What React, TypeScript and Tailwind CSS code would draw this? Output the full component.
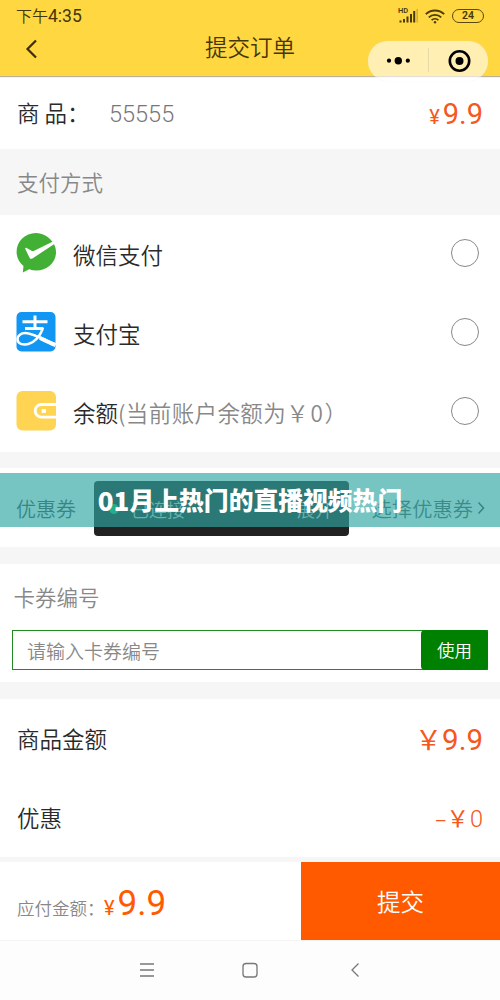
import type { ReactNode } from "react";

const methods = [
  { name: "微信支付", icon: <WechatIcon /> },
  { name: "支付宝", icon: <AlipayIcon /> },
  { name: "余额", note: "(当前账户余额为", amount: "￥0）", icon: <WalletIcon /> },
];

function WechatIcon() {
  return (
    <svg viewBox="0 0 40 40" className="h-10 w-10">
      <path
        d="M20 0C9 0 .6 8.300 .6 18.800c0 6 2.700 10.700 6.900 14.200L6.800 39.500l6.500-3.200c2.200.8 4.500 1.200 7 1.200C31.300 37.500 40 29.500 40 19.300c0-3-.6-5.600-2-8.100L16.500 25.400c-1 .7-2.200.6-2.800-.4L9.300 16c-.4-1 .5-1.600 1.400-1.100l4.800 2.900c.7.4 1.500.4 2.200.1L36.500 8.800C32.500 3.500 26.600 0 20 0Z"
        fill="#42b035"
      />
    </svg>
  );
}

function AlipayIcon() {
  return (
    <svg viewBox="0 0 40 40" className="h-10 w-10">
      <rect x=".5" width="39" height="39.500" rx="5" fill="#1296f3" />
      <g fill="none" stroke="#fff">
        <path d="M19 3.500v14M6.500 9.800h25M9 16.500h18" strokeWidth="3" />
        <path
          d="M27 15.500c-2.500 9-10 17-18.500 17-4.500 0-7-2-7-5.500s3.500-6 8-6c7 0 17 6 30 11.500"
          strokeWidth="2.600"
        />
        <path d="M24 26c5 2.500 10 5 15.500 7" strokeWidth="4" />
      </g>
    </svg>
  );
}

function WalletIcon() {
  return (
    <svg viewBox="0 0 40 40" className="h-10 w-10">
      <rect x=".5" width="39.500" height="39.500" rx="6" fill="#ffd452" />
      <path
        d="M40 13.500H25.500a6.300 6.300 0 0 0 0 12.600H40"
        fill="none"
        stroke="#fff"
        strokeWidth="2.800"
      />
      <rect x="25.500" y="18" width="4.500" height="4" rx="1" fill="#fff" />
    </svg>
  );
}

function StatusBar() {
  return (
    <div className="flex h-8 items-center pl-4 pr-4">
      <span className="text-[16px]">
        下午<span className="font-['Roboto'] text-[17.500px] font-normal">4:35</span>
      </span>
      <svg viewBox="0 0 20 16" className="ml-auto h-4 w-5 overflow-visible" fill="#4a3a08">
        <text x="-1" y="4.500" fontSize="7.500" fontWeight="600" className="font-['Roboto']">
          HD
        </text>
        <path d="M.5 12.500h2v2h-2zM4 11h2v3.500h-2zM7.500 8.500h2v6h-2zM11 6h2v8.500h-2zM14.200 3h2v11.500h-2z" />
        <path d="M17.500 1h1.300v13.500h-1.300z" opacity=".3" />
      </svg>
      <svg viewBox="0 0 20 15" className="ml-[6px] h-[15px] w-5" fill="none" stroke="#4a3a08" strokeWidth="1.800">
        <path d="M.8 5.200a13.300 13.300 0 0 1 18.400 0M3.800 8.300a9 9 0 0 1 12.400 0M6.600 11.200a5 5 0 0 1 6.800 0" />
        <circle cx="10" cy="13.200" r="1.200" fill="#4a3a08" stroke="none" />
      </svg>
      <span className="ml-[7px] flex h-[14px] w-8 items-center justify-center rounded-full border-[1.500px] border-[#5a480e] font-['Roboto'] text-[10.500px] font-semibold">
        24
      </span>
    </div>
  );
}

function Capsule() {
  return (
    <div className="absolute left-[368px] top-[41px] h-10 w-[120px] rounded-full bg-white/60 shadow-[0_0_1px_#e8e4d4]">
      <svg viewBox="0 0 120 40" className="h-10 w-[120px]">
        <circle cx="21" cy="19.700" r="2.100" />
        <circle cx="30.300" cy="19.700" r="3.700" />
        <circle cx="39.800" cy="19.700" r="2.100" />
        <path d="M60.500 7v24" stroke="#e6dba8" />
        <circle cx="91.500" cy="20" r="9.700" fill="none" stroke="#000" strokeWidth="2.600" />
        <circle cx="91.500" cy="20" r="4" />
      </svg>
    </div>
  );
}

function Row({ children, className = "px-[17px]" }: { children: ReactNode; className?: string }) {
  return (
    <div className={`flex h-[79px] items-center justify-between bg-white ${className}`}>
      {children}
    </div>
  );
}

function CouponSection() {
  return (
    <section className="relative">
      <Row className="pl-4 pr-[13px]">
        <span className="pt-[2px] text-[20px] text-[#444]">优惠券</span>
        <span className="flex items-center pt-[2px] text-[20.300px] text-[#555]">
          选择优惠券
          <svg viewBox="0 0 12 14" className="ml-[2px] h-[14px] w-3" fill="none" stroke="#444" strokeWidth="1.500">
            <path d="M3.500 1.500 8.500 7l-5 5.500" />
          </svg>
        </span>
      </Row>
      <div className="absolute left-[94px] top-[13px] flex h-[55px] w-[255px] items-center rounded bg-[#222] pl-[15px] pr-4 text-[18px] text-[#ccc]">
        <i className="h-[10px] w-[10px] rounded-full bg-[#07c160]" />
        <span className="ml-3">已连接</span>
        <span className="ml-auto">展开</span>
      </div>
      <div className="absolute left-0 top-[5px] flex h-[54px] w-full items-center justify-center bg-[rgba(47,167,164,0.66)] pb-px text-[24.800px] font-black text-white">
        <span className="text-[26px]">01</span>月上热门的直播视频热门
      </div>
    </section>
  );
}

export default function App() {
  return (
    <div className="flex h-[1000px] w-[500px] flex-col overflow-hidden whitespace-nowrap bg-[#f6f6f6] font-['Noto_Sans_CJK_SC',sans-serif] font-[350] leading-none text-[#2a2a2a]">
      <header className="relative z-10 h-[76px] bg-[#ffd740] text-[#443608] shadow-[0_1px_1px_#b9b19a]">
        <StatusBar />
        <div className="flex h-8 items-center">
          <svg viewBox="0 0 12 20" className="ml-[25px] mt-[2px] h-5 w-3" fill="none" stroke="#3b2f08" strokeWidth="2.200">
            <path d="M11 1.500 2.500 10l8.500 8.500" />
          </svg>
          <h1 className="mb-[3px] ml-[168px] text-[22.500px]">提交订单</h1>
        </div>
        <Capsule />
      </header>

      <div className="flex h-[73px] items-center bg-white px-[17px]">
        <span className="w-[92px] text-[22.500px]">商 品：</span>
        <span className="pt-[4px] font-['Roboto'] text-[23.500px] font-light text-[#777]">55555</span>
        <span className="ml-auto flex items-baseline pt-[4px] text-[#f4581c]">
          <span className="font-['Roboto'] text-[20px] font-normal">¥</span>
          <span className="ml-[3px] font-['Roboto'] text-[29px] font-normal">9.9</span>
        </span>
      </div>

      <h2 className="flex h-[66px] items-center pl-[17px] text-[21.500px] text-[#888]">支付方式</h2>

      {methods.map((m) => (
        <Row key={m.name} className="pb-[3px] pl-4 pr-[21px]">
          {m.icon}
          <span className="ml-[17px] mr-auto pt-[3px] text-[22.500px]">
            {m.name}
            {m.note && (
              <span className="text-[#888]">
                <span className="tracking-[0.400px]">{m.note}</span>
                <span className="tracking-[1.800px]">{m.amount}</span>
              </span>
            )}
          </span>
          <i className="h-7 w-7 rounded-full border border-[#888]" />
        </Row>
      ))}

      <div className="mt-4">
        <CouponSection />
      </div>

      <section className="mt-[17px] h-[118px] bg-white px-3">
        <h2 className="flex h-[66px] items-center pl-[1.500px] text-[21.500px] text-[#888]">卡券编号</h2>
        <div className="flex h-10 w-[476px] items-stretch border-[1.500px] border-[#218a21]">
          <span className="flex flex-1 items-center pl-[14px] text-[19px] text-[#888]">请输入卡券编号</span>
          <button className="-my-px -mr-px w-[67px] rounded bg-[#008000] text-[17.500px] text-white">使用</button>
        </div>
      </section>

      <section className="mt-[17px]">
        <Row>
          <span className="text-[22.500px]">商品金额</span>
          <span className="flex items-baseline pt-[4px] text-[#f4581c]">
            <span className="text-[27px] font-normal">￥</span>
            <span className="font-['Roboto'] text-[29.500px] font-normal">9.9</span>
          </span>
        </Row>
        <Row>
          <span className="text-[22.500px]">优惠</span>
          <span className="flex items-baseline pt-[2px] text-[#f4581c]">
            <span className="w-[10px] font-['Roboto'] text-[19px] font-normal">–</span>
            <span className="mr-px ml-[2px] text-[22.500px] font-normal">￥</span>
            <span className="font-['Roboto'] text-[23.500px]">0</span>
          </span>
        </Row>
      </section>

      <footer className="mt-[5px] flex h-[78px] bg-white">
        <div className="flex w-[301px] items-baseline pl-[17px] pt-[24px]">
          <span className="w-[87px] text-[17.500px] text-[#888]">应付金额：</span>
          <span className="font-['Roboto'] text-[20px] font-normal text-[#ff5a00]">¥</span>
          <span className="ml-[3px] font-['Roboto'] text-[35px] font-normal text-[#ff5a00]">9.9</span>
        </div>
        <button className="flex-1 bg-[#ff5a00] pt-[2px] text-[23.500px] text-white">提交</button>
      </footer>

      <nav className="h-[60px] border-t border-[#f4f4f4] bg-[#fdfdfd]">
        <svg viewBox="0 0 500 60" className="h-[60px] w-[500px]" fill="none" stroke="#777" strokeWidth="1.300">
          <path d="M140 23h14M140 29h14M140 35h14" />
          <rect x="243" y="22.500" width="14" height="13.500" rx="3" />
          <path d="m358.500 22.500-6.500 6.500 6.500 6.500" />
        </svg>
      </nav>
    </div>
  );
}
